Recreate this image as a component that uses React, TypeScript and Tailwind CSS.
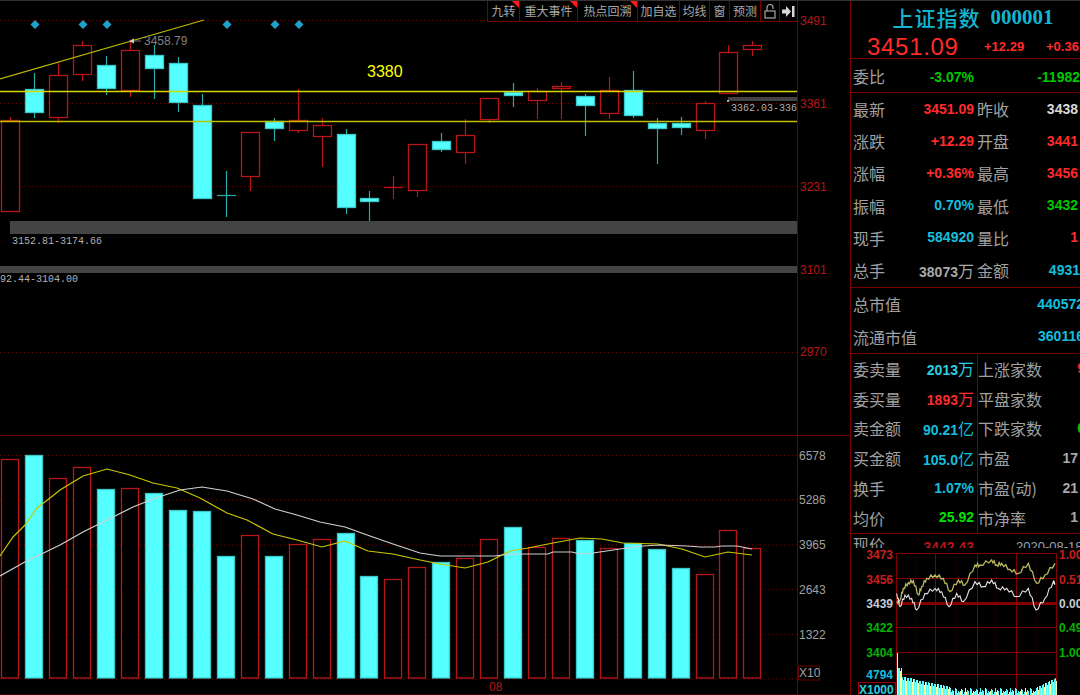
import React from 'react'

const RED = '#b81616'
const CYAN_EDGE = '#2aa9a9'
const CYAN = '#55ffff'
const GRID = '#6a0000'
const cjk = { fontFamily: '"Noto Sans CJK SC", "Liberation Sans", sans-serif' }
const sans = { fontFamily: '"Liberation Sans", sans-serif' }

// x, wick top, wick bottom, body top, body bottom, up
const candles: [number, number, number, number, number, boolean][] = [
  [10.5, 117, 211, 120, 211, true],
  [34, 73, 118, 89, 112, false],
  [58, 63, 123, 75, 117, true],
  [82, 41, 81, 45, 74, true],
  [106, 56, 95, 65, 88, false],
  [130, 41, 97, 50, 90, true],
  [154, 45, 99, 55, 68, false],
  [178, 57, 112, 63, 102, false],
  [202, 94, 198, 105, 198, false],
  [226, 171, 217, 195, 195, false],
  [250, 132, 191, 132, 176, true],
  [274, 118, 141, 121, 128, false],
  [298, 89, 133, 120, 130, true],
  [322, 118, 167, 125, 136, true],
  [346, 129, 214, 134, 207, false],
  [369, 191, 221, 198, 201, false],
  [393, 176, 199, 187, 187, true],
  [417, 144, 197, 144, 190, true],
  [441, 133, 152, 141, 149, false],
  [465, 119, 164, 135, 152, true],
  [489, 98, 123, 98, 119, true],
  [513, 83, 107, 92, 95, false],
  [537, 88, 119, 91, 100, true],
  [561, 82, 119, 86, 88, true],
  [585, 94, 136, 96, 105, false],
  [609, 77, 119, 90, 113, true],
  [633, 71, 118, 90, 115, false],
  [657, 118, 164, 123, 128, false],
  [681, 117, 135, 123, 127, false],
  [705, 101, 139, 103, 130, true],
  [728, 45, 93, 52, 93, true],
  [752, 41, 56, 45, 49, true],
]

const volumes = [459, 455, 478, 467, 489, 488, 493, 510, 511, 556, 535, 556, 544, 539, 533, 576, 579, 567, 562, 558, 539, 527, 547, 538, 540, 548, 543, 549, 568, 574, 530, 548]

const yellowMa = '0,556 13,537 25,525 37,508 50,498 60,490 83,476 107,469 130,475 153,483 177,488 200,498 227,513 247,520 273,534 297,540 322,547 345,541 368,551 393,554 420,560 440,564 465,568 488,562 510,551 528,548 553,543 580,538 602,539 623,543 658,544 682,549 705,557 728,552 752,555'
const whiteMa = '0,576 23,563 60,545 83,532 107,520 133,507 153,499 180,490 202,487 227,491 253,499 275,509 297,515 320,522 345,527 370,536 393,544 420,553 440,556 495,556 510,554 548,554 553,552 572,552 580,554 593,553 620,549 643,546 660,545 687,546 700,547 715,547 722,546 737,546 752,549'

const miniYellow = [[140, 215], [150, 210], [160, 175], [175, 158], [190, 152], [205, 195], [215, 170], [230, 145], [255, 135], [280, 145], [300, 185], [325, 150], [345, 165], [375, 105], [390, 105], [425, 90], [440, 105], [455, 100], [480, 118], [505, 130], [535, 100], [560, 160], [585, 135], [615, 100]]
const miniWhite = [[140, 190], [150, 230], [165, 195], [185, 205], [200, 240], [225, 190], [255, 175], [275, 185], [297, 230], [320, 190], [340, 215], [375, 155], [400, 170], [425, 150], [445, 175], [470, 175], [500, 200], [535, 175], [558, 240], [585, 205], [610, 155], [615, 160]]

// zoom coords to page coords, with a small zigzag so the line reads as tick data
const jagged = (pts: number[][]) => {
  const out: string[] = []
  pts.forEach((p, i) => {
    const next = pts[i + 1]
    out.push(`${850 + p[0] / 3},${530 + p[1] / 3}`)
    if (next) {
      for (let k = 1; k < 4; k++) {
        const x = p[0] + ((next[0] - p[0]) * k) / 4
        const y = p[1] + ((next[1] - p[1]) * k) / 4 + (k % 2 ? 5 : -5)
        out.push(`${850 + x / 3},${530 + y / 3}`)
      }
    }
  })
  return out.join(' ')
}

const envelope = (x: number) => {
  if (x < 898) return 653
  if (x < 902) return 668
  if (x < 916) return 677 + (x - 902) * 0.15
  if (x < 950) return 680 + (x - 916) * 0.2
  if (x < 1035) return 688 + (x % 5)
  return 688 - (x - 1035) * 0.5
}
const miniBars = Array.from({ length: 160 }, (_, i) => 897 + i)

const diamonds = [35, 83, 107, 227, 275, 299]

const tools = [
  { label: '九转', w: 'w-[32px]', flag: true },
  { label: '重大事件', w: 'w-[58px]', flag: true },
  { label: '热点回溯', w: 'w-[60px]', flag: true },
  { label: '加自选', w: 'w-[42px]', flag: false },
  { label: '均线', w: 'w-[30px]', flag: false },
  { label: '窗', w: 'w-[20px]', flag: false },
  { label: '预测', w: 'w-[31px]', flag: false },
]

function PriceChart() {
  return (
    <svg className="block w-[850px] h-[434px]" viewBox="0 1 850 434">
      {[20.5, 103.5, 186.5, 269.5, 352.5].map((y) => (
        <line key={y} x1="0" x2="797" y1={y} y2={y} stroke={GRID} strokeDasharray="1 3" />
      ))}
      <line x1="797.5" x2="797.5" y1="0" y2="435" stroke={GRID} />
      <rect x="10" y="221" width="787" height="13" fill="#444" />
      <rect x="0" y="266" width="797" height="7" fill="#444" />
      <rect x="728" y="97" width="69" height="4" fill="#444" />
      {candles.map(([x, hi, lo, top, bottom, up], i) => {
        const c = up ? RED : CYAN_EDGE
        const cx = Math.floor(x) + 0.5
        const flat = bottom - top < 1
        return (
          <g key={i}>
            <line x1={cx} x2={cx} y1={hi} y2={lo} stroke={c} strokeWidth="1.2" />
            {flat ? (
              <line x1={cx - 9.5} x2={cx + 9.5} y1={top + 0.5} y2={top + 0.5} stroke={c} strokeWidth="1.2" />
            ) : (
              <rect
                x={cx - 9}
                y={top + 0.5}
                width="18"
                height={bottom - top}
                fill={up ? '#000' : CYAN}
                stroke={up ? RED : '#3cc9c9'}
                strokeWidth="1.3"
              />
            )}
          </g>
        )
      })}
      <line x1="0" y1="79" x2="204" y2="20" stroke="#b8b800" strokeWidth="1.3" />
      <line x1="0" y1="91.5" x2="797" y2="91.5" stroke="#d8d800" strokeWidth="1.6" />
      <line x1="0" y1="121.5" x2="797" y2="121.5" stroke="#c0c000" strokeWidth="1.6" />
      {diamonds.map((x) => (
        <polygon key={x} points={`${x},20 ${x + 4.5},24.5 ${x},29 ${x - 4.5},24.5`} fill="#1f9fc8" />
      ))}
      <polygon points="129,41 134,38.5 134,43.5" fill="#ccc" />
      <line x1="134" y1="41" x2="141" y2="41" stroke="#777" />
      <text x="144" y="45" fontSize="12" fill="#808080" fontFamily="Liberation Sans">3458.79</text>
      <text x="367" y="77" fontSize="16" fill="#ffff00" fontFamily="Liberation Sans">3380</text>
      <text x="12" y="244" fontSize="10" fill="#b0b0b0" fontFamily="Liberation Mono">3152.81-3174.66</text>
      <text x="0" y="282" fontSize="10" fill="#b0b0b0" fontFamily="Liberation Mono">92.44-3104.00</text>
      <rect x="727" y="100" width="2" height="2" fill="#aaa" />
      <text x="731" y="111" fontSize="10" fill="#b0b0b0" fontFamily="Liberation Mono">3362.03-336</text>
      {[['3491', 25], ['3361', 108], ['3231', 191], ['3101', 274], ['2970', 356]].map(([t, y]) => (
        <text key={t} x="800" y={y} fontSize="12" fill={RED} fontFamily="Liberation Sans">{t}</text>
      ))}
    </svg>
  )
}

function VolumeChart() {
  return (
    <svg className="block w-[850px] h-[260px] border-t border-[#7a0000]" viewBox="0 436 850 259">
      {[455.5, 500, 545, 589.5, 634.5, 679].map((y) => (
        <line key={y} x1="0" x2="797" y1={y} y2={y} stroke={GRID} strokeDasharray="1 3" />
      ))}
      <line x1="797.5" x2="797.5" y1="435" y2="695" stroke={GRID} />
      <line x1="0" x2="850" y1="694.5" y2="694.5" stroke="#4a0000" />
      {volumes.map((top, i) => {
        const up = candles[i][5]
        const x = Math.floor(candles[i][0]) - 8.5
        return (
          <rect
            key={i}
            x={x}
            y={top + 0.5}
            width="17"
            height={677.5 - top}
            fill={up ? '#000' : CYAN}
            stroke={up ? RED : '#3cc9c9'}
            strokeWidth="1.3"
          />
        )
      })}
      <polyline points={yellowMa} fill="none" stroke="#c8c800" strokeWidth="1.2" />
      <polyline points={whiteMa} fill="none" stroke="#d0d0d0" strokeWidth="1.2" />
      {[['6578', 460], ['5286', 504], ['3965', 549], ['2643', 594], ['1322', 639]].map(([t, y]) => (
        <text key={t} x="799" y={y} fontSize="12" fill="#a0a0a0" fontFamily="Liberation Sans">{t}</text>
      ))}
      <rect x="798.5" y="666" width="21" height="14" fill="#000" stroke={GRID} />
      <text x="799" y="677" fontSize="12" fill="#a0a0a0" fontFamily="Liberation Sans">X10</text>
      <text x="489" y="691" fontSize="12" fill={RED} fontFamily="Liberation Sans">08</text>
    </svg>
  )
}

function Toolbar() {
  return (
    <div className="absolute left-[487px] top-0 flex h-[21px] border-b border-l border-[#7a0000] bg-black text-[12px] text-[#a8a8a8]" style={cjk}>
      {tools.map((t) => (
        <div key={t.label} className={`relative flex items-center justify-center border-r border-[#7a0000] whitespace-nowrap ${t.w}`}>
          {t.label}
          {t.flag && <span className="absolute right-0 top-0 h-0 w-0 border-l-[7px] border-t-[7px] border-l-transparent border-t-[#ff1a1a]" />}
        </div>
      ))}
      <div className="flex w-[19px] items-center justify-center border-r border-[#7a0000]">
        <svg width="12" height="15" viewBox="0 0 12 15" fill="none" stroke="#a8a8a8" strokeWidth="1.2">
          <rect x="1" y="7" width="10" height="7" />
          <path d="M3 7V3.5a3 3 0 0 1 6 0V5" />
        </svg>
      </div>
      <div className="flex w-[18px] items-center justify-center border-r border-[#7a0000]">
        <svg width="13" height="11" viewBox="0 0 13 11" fill="#d8d8d8">
          <path d="M0 3.5h4V0l5 5.5L4 11V7.5H0z" />
          <rect x="10" y="0" width="2.5" height="11" />
        </svg>
      </div>
    </div>
  )
}

function Val({ children, color, unit, className = '' }: { children: React.ReactNode; color: string; unit?: string; className?: string }) {
  return (
    <span className={`whitespace-nowrap text-[14px] font-bold ${color} ${className}`} style={sans}>
      {children}
      {unit && <span className="text-[16px] font-normal" style={cjk}>{unit}</span>}
    </span>
  )
}

type RowData = {
  a: string
  v: string
  c: string
  unit?: string
  b: string
  w?: string
  d?: string
  off?: string
}

const quoteRows: RowData[] = [
  { a: '最新', v: '3451.09', c: 'text-[#ff2a2a]', b: '昨收', w: '3438', d: 'text-[#d8d8d8]', off: 'mr-[2px]' },
  { a: '涨跌', v: '+12.29', c: 'text-[#ff2a2a]', b: '开盘', w: '3441', d: 'text-[#ff2a2a]', off: 'mr-[2px]' },
  { a: '涨幅', v: '+0.36%', c: 'text-[#ff2a2a]', b: '最高', w: '3456', d: 'text-[#ff2a2a]', off: 'mr-[2px]' },
  { a: '振幅', v: '0.70%', c: 'text-[#14bedc]', b: '最低', w: '3432', d: 'text-[#00c800]', off: 'mr-[2px]' },
  { a: '现手', v: '584920', c: 'text-[#14bedc]', b: '量比', w: '1', d: 'text-[#ff2a2a]', off: 'mr-[2px]' },
  { a: '总手', v: '38073', c: 'text-[#a8a8a8]', unit: '万', b: '金额', w: '4931', d: 'text-[#14bedc]' },
]

const orderRows: RowData[] = [
  { a: '委卖量', v: '2013', c: 'text-[#2ccfe0]', unit: '万', b: '上涨家数', w: '9', d: 'text-[#ff2a2a]', off: '-mr-[5px]' },
  { a: '委买量', v: '1893', c: 'text-[#ff2a2a]', unit: '万', b: '平盘家数' },
  { a: '卖金额', v: '90.21', c: 'text-[#14bedc]', unit: '亿', b: '下跌家数', w: '6', d: 'text-[#00c800]', off: '-mr-[5px]' },
  { a: '买金额', v: '105.0', c: 'text-[#14bedc]', unit: '亿', b: '市盈', w: '17', d: 'text-[#a8a8a8]', off: 'mr-[2px]' },
  { a: '换手', v: '1.07%', c: 'text-[#14bedc]', b: '市盈(动)', w: '21', d: 'text-[#a8a8a8]', off: 'mr-[2px]' },
  { a: '均价', v: '25.92', c: 'text-[#00e000]', b: '市净率', w: '1', d: 'text-[#a8a8a8]', off: 'mr-[2px]' },
]

function QuoteRow({ r, split }: { r: RowData; split?: boolean }) {
  return (
    <div className={`flex items-center ${split ? 'h-[29.8px]' : 'h-[32.2px]'}`}>
      <div className={`flex shrink-0 items-center justify-between pl-[2px] ${split ? 'w-[127px] self-stretch border-r border-[#7a0000] pr-[3px]' : 'w-[124px] pr-[1px]'}`}>
        <span className="text-[16px] text-[#a0a0a0]" style={cjk}>{r.a}</span>
        <Val color={r.c} unit={r.unit}>{r.v}</Val>
      </div>
      <div className={`flex min-w-0 flex-1 items-center justify-between ${split ? '' : 'pl-[2px]'}`}>
        <span className="whitespace-nowrap text-[16px] text-[#a0a0a0]" style={cjk}>{r.b}</span>
        {r.w && <Val color={r.d ?? ''} className={r.off}>{r.w}</Val>}
      </div>
    </div>
  )
}

function MiniChart() {
  const left = [['3473', 559, '#c81e1e'], ['3456', 584, '#c81e1e'], ['3439', 608, '#c4ccd4'], ['3422', 632, '#00b400'], ['3404', 657, '#00b400'], ['4794', 679, '#14bedc']] as const
  const right = [['1.00', 559, '#c81e1e'], ['0.51', 584, '#c81e1e'], ['0.00', 608, '#c4ccd4'], ['0.49', 632, '#00b400'], ['1.00', 657, '#00b400']] as const
  return (
    <svg className="block w-[229px] h-[147px]" viewBox="851 548 229 147">
      <g shapeRendering="crispEdges">
        {[553.5, 578.5, 627.5, 652.5, 674.5].map((y) => (
          <line key={y} x1="896" x2="1057" y1={y} y2={y} stroke="#800000" />
        ))}
        <rect x="896" y="602" width="161" height="3" fill="#800000" />
        {[896.5, 935.5, 977.5, 1016.5, 1056.5].map((x) => (
          <line key={x} x1={x} x2={x} y1="553" y2="695" stroke="#800000" />
        ))}
        {[915.5, 956.5, 996.5, 1036.5].map((x) => (
          <line key={x} x1={x} x2={x} y1="553" y2="653" stroke="#600000" strokeDasharray="1 3" />
        ))}
        {miniBars.map((x) => {
          const top = envelope(x)
          const cyanBar = x % 3 !== 0 || x < 900
          return <line key={x} x1={x + 0.5} x2={x + 0.5} y1={cyanBar ? top : top + 3} y2="695" stroke={cyanBar && x % 4 !== 1 ? '#55ffff' : '#ffff99'} />
        })}
      </g>
      <polyline points={jagged(miniYellow)} fill="none" stroke="#b8b860" strokeWidth="1.3" />
      <polyline points={jagged(miniWhite)} fill="none" stroke="#e4e4e4" strokeWidth="1.1" />
      {left.map(([t, y, c]) => (
        <text key={y} x="893" y={y} textAnchor="end" fontSize="12" fontWeight="bold" fill={c} fontFamily="Liberation Sans">{t}</text>
      ))}
      {right.map(([t, y, c]) => (
        <text key={y} x="1059" y={y} fontSize="12" fontWeight="bold" fill={c} fontFamily="Liberation Sans">{t}</text>
      ))}
      <rect x="858.5" y="682.5" width="37" height="14" fill="#000" stroke="#a00000" />
      <text x="859" y="694" fontSize="12" fontWeight="bold" fill="#2ccfe0" fontFamily="Liberation Sans">X1000</text>
    </svg>
  )
}

function QuotePanel() {
  return (
    <div className="flex h-full w-[230px] shrink-0 flex-col overflow-hidden border-l border-[#7a0000]">
      <div className="h-[58px] border-b border-[#7a0000]">
        <div className="flex h-[34px] items-center justify-center gap-[10px] pl-[15px] text-[#12b4d0]">
          <span className="text-[21px] font-medium tracking-[1px] whitespace-nowrap" style={cjk}>上证指数</span>
          <span className="text-[21px] font-bold" style={{ fontFamily: '"Liberation Serif", serif' }}>000001</span>
        </div>
        <div className="flex h-[23px] items-center whitespace-nowrap text-[#ff2a2a]">
          <span className="ml-[16px] w-[117px] text-[24px] tracking-[0.7px]" style={sans}>3451.09</span>
          <span className="w-[62px] text-[13px] font-bold" style={sans}>+12.29</span>
          <span className="text-[13px] font-bold" style={sans}>+0.36</span>
        </div>
      </div>
      <div className="flex h-[34px] items-center border-b border-[#7a0000] pt-[1px]">
        <span className="w-[78px] pl-[2px] text-[16px] text-[#a0a0a0]" style={cjk}>委比</span>
        <span className="w-[45px] text-right"><Val color="text-[#00c800]">-3.07%</Val></span>
        <span className="flex-1 overflow-hidden text-right"><Val color="text-[#00c800]">-11982</Val></span>
      </div>
      <div className="h-[195px] border-b border-[#7a0000]">
        {quoteRows.map((r) => <QuoteRow key={r.a} r={r} />)}
      </div>
      <div className="h-[66px] border-b border-[#7a0000] pl-[2px]">
        <div className="flex h-[32.5px] items-center justify-between">
          <span className="text-[16px] text-[#a0a0a0]" style={cjk}>总市值</span>
          <Val color="text-[#14bedc]" className="-mr-[4px]">440572</Val>
        </div>
        <div className="flex h-[32.5px] items-center justify-between">
          <span className="text-[16px] text-[#a0a0a0]" style={cjk}>流通市值</span>
          <Val color="text-[#14bedc]" className="-mr-[4px]">360116</Val>
        </div>
      </div>
      <div className="h-[180px] border-b border-[#7a0000]">
        {orderRows.map((r) => <QuoteRow key={r.a} r={r} split />)}
      </div>
      <div className="flex h-[14px] overflow-hidden pt-[1px] leading-[18px]">
        <div className="flex w-[124px] shrink-0 justify-between pl-[2px] pr-[1px]">
          <span className="text-[16px] text-[#a0a0a0]" style={cjk}>现价</span>
          <span className="pt-[3px] text-[14px] font-bold text-[#b81616]" style={sans}>3442.43</span>
        </div>
        <span className="ml-[41px] whitespace-nowrap pt-[3px] text-[13px] text-[#9aa4b0]" style={sans}>2020-08-18</span>
      </div>
      <MiniChart />
    </div>
  )
}

export default function App() {
  return (
    <div className="flex h-[695px] w-[1080px] overflow-hidden border-t border-[#333] bg-black">
      <div className="relative flex w-[850px] shrink-0 flex-col">
        <PriceChart />
        <VolumeChart />
        <Toolbar />
      </div>
      <QuotePanel />
    </div>
  )
}
